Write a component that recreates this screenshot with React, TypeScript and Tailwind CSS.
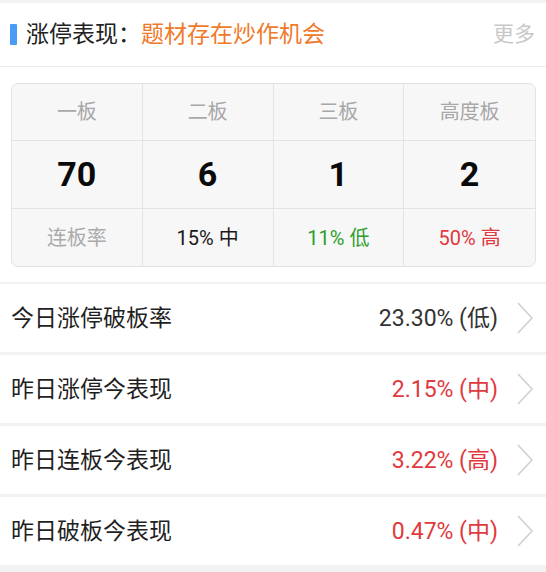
import React from "react";

const FONT = { fontFamily: "Roboto, 'Noto Sans CJK SC', sans-serif" };

function Chevron() {
  return (
    <svg width="18" height="32" viewBox="0 0 18 32" className="shrink-0">
      <path d="M2 1 L16 16 L2 31" fill="none" stroke="#cfcfcf" strokeWidth="1.5" />
    </svg>
  );
}

const rows = [
  { label: "今日涨停破板率", value: "23.30% (低)", color: "text-[#333333]" },
  { label: "昨日涨停今表现", value: "2.15% (中)", color: "text-[#e0393e]" },
  { label: "昨日连板今表现", value: "3.22% (高)", color: "text-[#e0393e]" },
  { label: "昨日破板今表现", value: "0.47% (中)", color: "text-[#e0393e]" },
];

export default function App() {
  return (
    <div className="w-[546px] h-[572px] bg-[#f2f2f2] overflow-hidden" style={FONT}>
      <div className="h-[3px]" />
      <div className="h-[64px] bg-white flex items-center pl-[10px] pr-[11px] border-b border-[#ececec]">
        <div className="w-[7px] h-[21px] bg-[#4a9bf5] rounded-[1px]" />
        <div className="ml-[9px] text-[23px] text-[#222222] leading-none">涨停表现：</div>
        <div className="text-[23px] text-[#f07a2a] leading-none">题材存在炒作机会</div>
        <div className="ml-auto text-[21px] text-[#c8c8c8] leading-none">更多</div>
      </div>
      <div className="bg-white pt-[16px] pb-[15px] pl-[11px] pr-[10px]">
        <div className="rounded-[7px] border border-[#e3e3e3] bg-[#f7f7f7] grid grid-cols-4 overflow-hidden">
          {["一板", "二板", "三板", "高度板"].map((t, i) => (
            <div
              key={t}
              className={`h-[57px] flex items-center justify-center text-[20px] text-[#a8a8a8] border-b border-[#e3e3e3] ${i < 3 ? "border-r" : ""}`}
            >
              {t}
            </div>
          ))}
          {["70", "6", "1", "2"].map((t, i) => (
            <div
              key={i}
              className={`h-[68px] flex items-center justify-center text-[34px] font-bold text-[#0a0a0a] border-b border-[#e3e3e3] ${i < 3 ? "border-r" : ""}`}
            >
              {t}
            </div>
          ))}
          <div className="h-[57px] flex items-center justify-center text-[20px] text-[#ababab] border-r border-[#e3e3e3]">连板率</div>
          <div className="h-[57px] flex items-center justify-center text-[20px] text-[#1a1a1a] border-r border-[#e3e3e3]">15% 中</div>
          <div className="h-[57px] flex items-center justify-center text-[20px] text-[#2e9e2e] border-r border-[#e3e3e3]">11% 低</div>
          <div className="h-[57px] flex items-center justify-center text-[20px] text-[#e0393e]">50% 高</div>
        </div>
      </div>
      <div className="flex flex-col gap-[3px] pt-[2px]">
        {rows.map((r) => (
          <div key={r.label} className="h-[68px] bg-white flex items-center pl-[11px] pr-[12px]">
            <div className="text-[23px] text-[#1f1f1f] leading-none">{r.label}</div>
            <div className={`ml-auto text-[23px] leading-none ${r.color}`}>{r.value}</div>
            <div className="ml-[18px]">
              <Chevron />
            </div>
          </div>
        ))}
      </div>
    </div>
  );
}
